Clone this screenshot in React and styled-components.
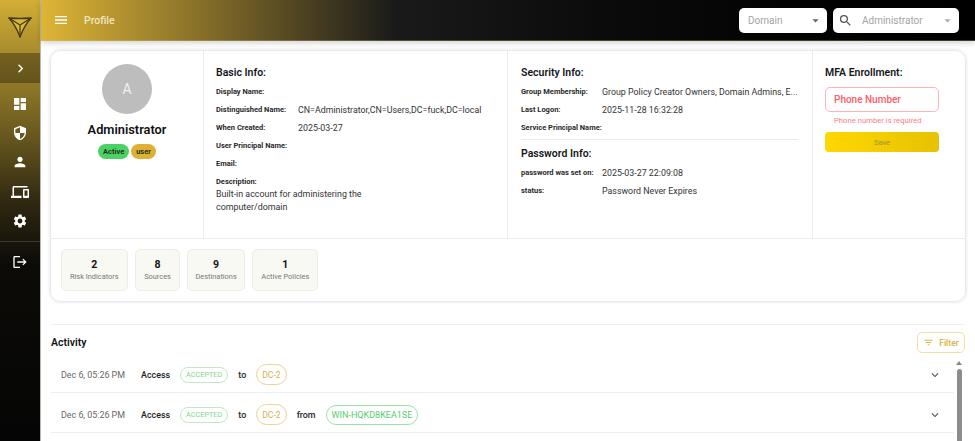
import React from "react";
import styled, { createGlobalStyle } from "styled-components";
import {
  MdArrowDropDown,
  MdChevronRight,
  MdDashboard,
  MdExpandMore,
  MdFilterList,
  MdLogout,
  MdMenu,
  MdOutlineDevices,
  MdPerson,
  MdSearch,
  MdSecurity,
  MdSettings,
} from "react-icons/md";

const GlobalStyle = createGlobalStyle`
  html, body {
    margin: 0;
    height: 100%;
    overflow: hidden;
    background: #fff;
    font-family: Roboto, "Liberation Sans", sans-serif;
  }
  #root { height: 100%; }
  * { box-sizing: border-box; }
`;

const Layout = styled.div`
  display: flex;
  height: 100vh;
`;

const Sidebar = styled.aside`
  flex: 0 0 41px;
  display: flex;
  flex-direction: column;
  align-items: stretch;
  color: #fff;
  border-right: 1px solid #b9b9b4;
  background: linear-gradient(180deg, #d3ae36 0%, #a78c2d 12%, #6a5a20 30%, #2c2510 47%, #0c0b07 60%, #050505 100%);
`;

const LogoBox = styled.div`
  height: 53px;
  display: flex;
  align-items: center;
  justify-content: center;
`;

const Expander = styled.div`
  height: 30px;
  display: flex;
  align-items: center;
  justify-content: center;
  background: rgba(0, 0, 0, 0.3);
  font-size: 17px;
  margin-bottom: 6px;
`;

const NavItem = styled.div`
  height: 29.4px;
  display: flex;
  align-items: center;
  justify-content: center;
  font-size: ${(p) => p.$size || 16}px;
`;

const NavRule = styled.div`
  height: 1px;
  margin: 5px 0 5.5px;
  background: rgba(255, 255, 255, 0.16);
`;

const Main = styled.div`
  flex: 1;
  min-width: 0;
  display: flex;
  flex-direction: column;
`;

const Header = styled.header`
  flex: 0 0 41px;
  display: flex;
  align-items: center;
  padding: 0 16px 0 12px;
  color: #fff;
  background: linear-gradient(90deg, #dfb536 0%, #1a1a1a 38%, #0b0b0b 60%, #030303 80%, #000 100%);
  border-bottom: 1px solid rgba(214, 196, 130, 0.3);
  box-shadow: 0 2px 6px rgba(0, 0, 0, 0.18);
  position: relative;
  z-index: 2;
`;

const MenuButton = styled.div`
  display: flex;
  font-size: 16px;
  margin-right: 15px;
`;

const PageTitle = styled.div`
  flex: 1;
  font-size: 10.5px;
  font-weight: 500;
  color: #efe6c0;
`;

const Select = styled.div`
  height: 25px;
  width: ${(p) => p.$width}px;
  margin-left: 6px;
  display: flex;
  align-items: center;
  padding: 0 4px 0 9px;
  background: #fff;
  border-radius: 5px;
  font-size: 10px;
  color: #a3a3a3;
  & > span { flex: 1; }
`;

const SearchIcon = styled(MdSearch)`
  font-size: 15px;
  color: #555;
  margin: 0 9px 0 -4px;
`;

const Content = styled.main`
  flex: 1;
  min-height: 0;
  display: flex;
  flex-direction: column;
  padding: 10px 10px 0;
`;

const Card = styled.section`
  flex: 0 0 250px;
  display: flex;
  flex-direction: column;
  background: #fff;
  border-radius: 9px;
  box-shadow: 0 0 4px rgba(0, 0, 0, 0.2);
`;

const InfoGrid = styled.div`
  flex: 0 0 188px;
  display: grid;
  grid-template-columns: 152px 304px 305px 1fr;
  border-bottom: 1px solid #ecece9;
`;

const Column = styled.div`
  padding: 15px 13px 0 ${(p) => p.$left || 12}px;
  border-left: 1px solid #ecece9;
`;

const EnrollColumn = styled(Column)`
  padding-right: 26px;
`;

const ProfileColumn = styled.div`
  display: flex;
  flex-direction: column;
  align-items: center;
  padding-top: 13px;
`;

const Avatar = styled.div`
  width: 50px;
  height: 50px;
  border-radius: 50%;
  background: #bdbdbd;
  color: #f1f1f1;
  font-size: 14px;
  display: flex;
  align-items: center;
  justify-content: center;
`;

const UserName = styled.div`
  margin-top: 8px;
  font-size: 12.8px;
  font-weight: 600;
  color: #111;
`;

const Badges = styled.div`
  display: flex;
  gap: 2px;
  margin-top: 7px;
`;

const Badge = styled.span`
  height: 15px;
  padding: 0 5px;
  border-radius: 8px;
  display: flex;
  align-items: center;
  font-size: 7.5px;
  font-weight: 600;
  color: #1a2a14;
  background: ${(p) => p.$bg};
`;

const SectionTitle = styled.h3`
  margin: ${(p) => p.$top || 0}px 0 3.5px;
  font-size: 10.5px;
  line-height: 13px;
  font-weight: 600;
  color: #16161a;
`;

const Field = styled.div`
  display: flex;
  align-items: center;
  height: 18px;
`;

const Label = styled.span`
  flex: 0 0 ${(p) => p.$width}px;
  font-size: 7.5px;
  font-weight: 700;
  color: #2a2a2a;
  white-space: nowrap;
`;

const Value = styled.span`
  font-size: 8.85px;
  color: #333;
  white-space: nowrap;
`;

const Description = styled.div`
  width: 165px;
  font-size: 8.9px;
  line-height: 13px;
  color: #333;
  margin-top: -2.5px;
`;

const Rule = styled.div`
  height: 1px;
  margin: 2.5px 1px 0 0;
  background: #ecece9;
`;

const PhoneInput = styled.div`
  height: 25px;
  display: flex;
  align-items: center;
  padding-left: 8px;
  margin-top: 8px;
  border: 1px solid #ffb3b8;
  border-radius: 5px;
  font-size: 10px;
  font-weight: 500;
  color: #ff5c68;
`;

const HelperText = styled.div`
  margin: 4px 0 0 9px;
  font-size: 7.7px;
  line-height: 9px;
  color: #ff7d86;
`;

const SaveButton = styled.div`
  height: 20px;
  margin-top: 7px;
  display: flex;
  align-items: center;
  justify-content: center;
  border-radius: 4px;
  background: linear-gradient(90deg, #ffd700, #e6c200);
  font-size: 7.5px;
  font-weight: 500;
  color: #a89b3a;
`;

const StatRow = styled.div`
  display: flex;
  gap: 7.6px;
  padding: 10px 10px 0;
`;

const Stat = styled.div`
  height: 42px;
  padding: 0 ${(p) => p.$pad || 8}px;
  display: flex;
  flex-direction: column;
  align-items: center;
  justify-content: center;
  background: #f9f9f4;
  border: 1px solid #eeeee8;
  border-radius: 5px;
`;

const StatValue = styled.div`
  font-size: 10.5px;
  line-height: 13px;
  font-weight: 700;
  color: #111;
`;

const StatLabel = styled.div`
  margin-top: 1px;
  font-size: 7.4px;
  line-height: 10px;
  color: #777;
`;

const Activity = styled.section`
  flex: 1;
  min-height: 0;
  display: flex;
  flex-direction: column;
  margin-top: 23px;
  border-top: 1px solid #eeeeee;
`;

const ActivityHead = styled.div`
  flex: 0 0 28px;
  display: flex;
  align-items: center;
  justify-content: space-between;
  padding-top: 7px;
`;

const ActivityTitle = styled.h3`
  margin: 0;
  font-size: 10.5px;
  font-weight: 600;
  color: #111;
`;

const FilterButton = styled.div`
  width: 48px;
  height: 21px;
  display: flex;
  align-items: center;
  justify-content: center;
  gap: 5px;
  border: 1px solid #f1dfa6;
  border-radius: 5px;
  font-size: 8.5px;
  font-weight: 600;
  color: #dcb64a;
  & svg { font-size: 11px; }
`;

const ActivityBody = styled.div`
  flex: 1;
  min-height: 0;
  display: flex;
`;

const ActivityList = styled.div`
  flex: 1;
  min-width: 0;
  overflow: hidden;
`;

const ScrollTrack = styled.div`
  flex: 0 0 10px;
  display: flex;
  flex-direction: column;
  align-items: center;
  padding: 8px 3px 0 2px;
`;

const ScrollArrow = styled.div`
  width: 0;
  height: 0;
  border-left: 3px solid transparent;
  border-right: 3px solid transparent;
  border-bottom: 4px solid #888;
`;

const ScrollThumb = styled.div`
  flex: 1;
  width: 5px;
  margin-top: 4px;
  background: #8c8c8c;
  border-radius: 3px 3px 0 0;
`;

const Row = styled.div`
  height: 40px;
  display: flex;
  align-items: center;
  padding: 4px 12px 0 10px;
  border-bottom: 1px solid #eeeeee;
  font-size: 8.9px;
`;

const Time = styled.span`
  width: 70px;
  color: #666;
`;

const Word = styled.span`
  margin: 0 10px;
  font-weight: 500;
  color: #222;
`;

const Pill = styled.span`
  height: ${(p) => p.$height}px;
  padding: 0 ${(p) => p.$pad}px;
  display: flex;
  align-items: center;
  border: 1px solid ${(p) => p.$line};
  border-radius: ${(p) => p.$height / 2}px;
  font-size: ${(p) => p.$size}px;
  color: ${(p) => p.$color};
`;

const Chevron = styled(MdExpandMore)`
  margin-left: auto;
  font-size: 14px;
  color: #555;
`;

// inverted triangle with lines running to its middle
const Logo = () => (
  <svg width="24" height="22" viewBox="0 0 24 22" fill="none" strokeLinejoin="round" strokeLinecap="round">
    <path d="M1 2 Q12 3 23 2 Q16 10 12 21 Q8 10 1 2 Z" fill="#d8b63e" stroke="#43380f" strokeWidth="1.3" />
    <path d="M1 2 L12 9 L23 2 M12 9 L12 21" stroke="#43380f" strokeWidth="1.2" />
  </svg>
);

const accepted = { $height: 16, $pad: 5, $size: 7.3, $line: "#bdeac4", $color: "#7fd98d" };
const gold = { $height: 21, $pad: 5, $size: 8.6, $line: "#eed28e", $color: "#dcb04a" };
const host = { $height: 20, $pad: 5, $size: 9, $line: "#98e3a4", $color: "#55cf68" };

const ActivityRow = ({ from }) => (
  <Row>
    <Time>Dec 6, 05:26 PM</Time>
    <Word>Access</Word>
    <Pill {...accepted}>ACCEPTED</Pill>
    <Word>to</Word>
    <Pill {...gold}>DC-2</Pill>
    {from && <Word>from</Word>}
    {from && <Pill {...host}>{from}</Pill>}
    <Chevron />
  </Row>
);

export default function App() {
  return (
    <>
      <GlobalStyle />
      <Layout>
        <Sidebar>
          <LogoBox>
            <Logo />
          </LogoBox>
          <Expander>
            <MdChevronRight />
          </Expander>
          <NavItem><MdDashboard /></NavItem>
          <NavItem><MdSecurity /></NavItem>
          <NavItem><MdPerson /></NavItem>
          <NavItem $size={18}><MdOutlineDevices /></NavItem>
          <NavItem><MdSettings /></NavItem>
          <NavRule />
          <NavItem><MdLogout /></NavItem>
        </Sidebar>
        <Main>
          <Header>
            <MenuButton><MdMenu /></MenuButton>
            <PageTitle>Profile</PageTitle>
            <Select $width={88}>
              <span>Domain</span>
              <MdArrowDropDown size={15} color="#666" />
            </Select>
            <Select $width={126}>
              <SearchIcon />
              <span>Administrator</span>
              <MdArrowDropDown size={15} color="#aaa" />
            </Select>
          </Header>
          <Content>
            <Card>
              <InfoGrid>
                <ProfileColumn>
                  <Avatar>A</Avatar>
                  <UserName>Administrator</UserName>
                  <Badges>
                    <Badge $bg="#4cd263">Active</Badge>
                    <Badge $bg="#deb034">user</Badge>
                  </Badges>
                </ProfileColumn>
                <Column>
                  <SectionTitle>Basic Info:</SectionTitle>
                  <Field><Label>Display Name:</Label></Field>
                  <Field>
                    <Label $width={82}>Distinguished Name:</Label>
                    <Value>CN=Administrator,CN=Users,DC=fuck,DC=local</Value>
                  </Field>
                  <Field>
                    <Label $width={82}>When Created:</Label>
                    <Value>2025-03-27</Value>
                  </Field>
                  <Field><Label>User Principal Name:</Label></Field>
                  <Field><Label>Email:</Label></Field>
                  <Field><Label>Description:</Label></Field>
                  <Description>Built-in account for administering the computer/domain</Description>
                </Column>
                <Column $left={13}>
                  <SectionTitle>Security Info:</SectionTitle>
                  <Field>
                    <Label $width={81}>Group Membership:</Label>
                    <Value>Group Policy Creator Owners, Domain Admins, E...</Value>
                  </Field>
                  <Field>
                    <Label $width={81}>Last Logon:</Label>
                    <Value>2025-11-28 16:32:28</Value>
                  </Field>
                  <Field><Label>Service Principal Name:</Label></Field>
                  <Rule />
                  <SectionTitle $top={7}>Password Info:</SectionTitle>
                  <Field>
                    <Label $width={81}>password was set on:</Label>
                    <Value>2025-03-27 22:09:08</Value>
                  </Field>
                  <Field>
                    <Label $width={81}>status:</Label>
                    <Value>Password Never Expires</Value>
                  </Field>
                </Column>
                <EnrollColumn>
                  <SectionTitle>MFA Enrollment:</SectionTitle>
                  <PhoneInput>Phone Number</PhoneInput>
                  <HelperText>Phone number is required</HelperText>
                  <SaveButton>Save</SaveButton>
                </EnrollColumn>
              </InfoGrid>
              <StatRow>
                <Stat>
                  <StatValue>2</StatValue>
                  <StatLabel>Risk Indicators</StatLabel>
                </Stat>
                <Stat>
                  <StatValue>8</StatValue>
                  <StatLabel>Sources</StatLabel>
                </Stat>
                <Stat $pad={7}>
                  <StatValue>9</StatValue>
                  <StatLabel>Destinations</StatLabel>
                </Stat>
                <Stat>
                  <StatValue>1</StatValue>
                  <StatLabel>Active Policies</StatLabel>
                </Stat>
              </StatRow>
            </Card>
            <Activity>
              <ActivityHead>
                <ActivityTitle>Activity</ActivityTitle>
                <FilterButton>
                  <MdFilterList />
                  Filter
                </FilterButton>
              </ActivityHead>
              <ActivityBody>
                <ActivityList>
                  <ActivityRow />
                  <ActivityRow from="WIN-HQKD8KEA1SE" />
                </ActivityList>
                <ScrollTrack>
                  <ScrollArrow />
                  <ScrollThumb />
                </ScrollTrack>
              </ActivityBody>
            </Activity>
          </Content>
        </Main>
      </Layout>
    </>
  );
}
